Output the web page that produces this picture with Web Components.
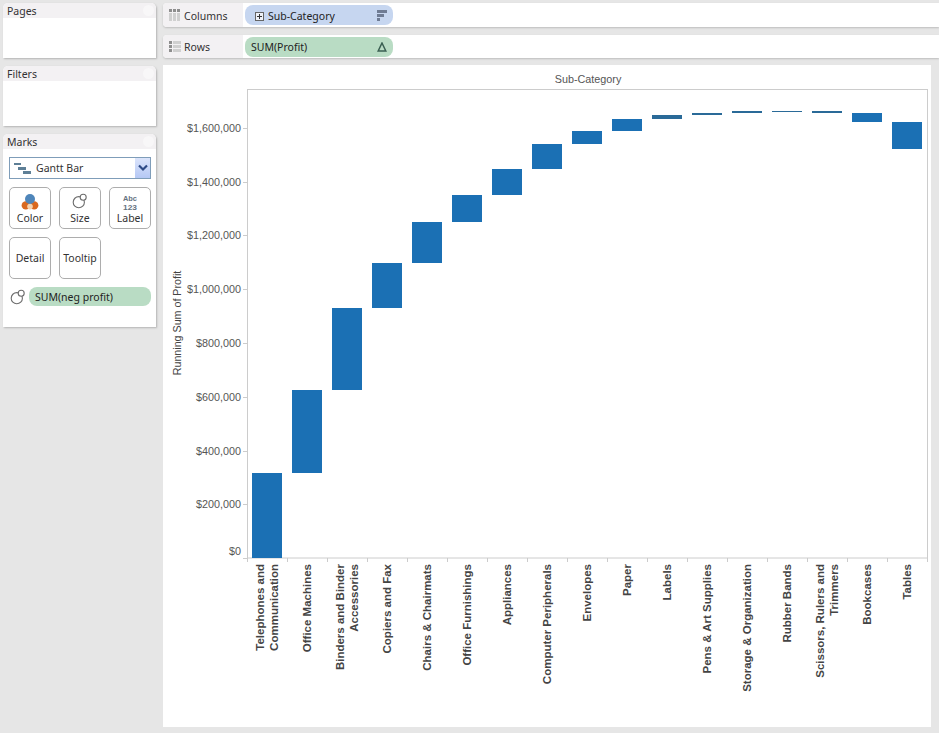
<!DOCTYPE html>
<html>
<head>
<meta charset="utf-8">
<title>Sub-Category waterfall</title>
<style>
  html, body { margin: 0; height: 100%; }
  body {
    background: #e6e6e6;
    font-family: "Noto Sans", "Liberation Sans", sans-serif;
    overflow: hidden;
  }
  .app {
    display: grid;
    grid-template-columns: 153px 1fr;
    column-gap: 7px;
    padding: 3px 0 6px 3px;
    height: 724px;
  }
  .left { display: flex; flex-direction: column; gap: 8px; }
  .right { display: flex; flex-direction: column; }
</style>
</head>
<body>
<div class="app">
  <div class="left">
    <tb-card title="Pages" style="height:55px"></tb-card>
    <tb-card title="Filters" style="height:60px"></tb-card>
    <tb-card title="Marks" style="height:193px">
      <tb-marks></tb-marks>
    </tb-card>
  </div>
  <div class="right">
    <tb-shelf label="Columns" icon="columns">
      <tb-pill color="blue" toggle sort>Sub-Category</tb-pill>
    </tb-shelf>
    <tb-shelf label="Rows" icon="rows" style="margin-top:8px;height:23px">
      <tb-pill color="green" delta>SUM(Profit)</tb-pill>
    </tb-shelf>
    <tb-chart style="margin-top:7px"></tb-chart>
  </div>
</div>

<script>
const SIZE_ICON = `<svg width="16" height="16" viewBox="0 0 16 16" fill="none" stroke="#6d6d6d" stroke-width="1.1">
  <circle cx="6.8" cy="9.2" r="5.6"/><circle cx="11.2" cy="4.2" r="3" fill="#fff"/></svg>`;

customElements.define("tb-card", class extends HTMLElement {
  constructor() {
    super();
    const root = this.attachShadow({ mode: "open" });
    root.innerHTML = `
    <style>
      :host {
        display: block;
        position: relative;
        background: #fff;
        box-shadow: 1px 1px 2px #b4b4b4;
        border-radius: 5px 5px 0 0;
        overflow: hidden;
      }
      h2 {
        margin: 0;
        box-sizing: border-box;
        height: 15px;
        padding: 2px 0 0 4px;
        font-size: 10.5px;
        line-height: 13px;
        font-weight: normal;
        color: #333;
        background: #f3f1f3;
      }
      .knob {
        position: absolute;
        top: 2px;
        right: 2px;
        width: 11px;
        height: 11px;
        border-radius: 50%;
        background: #f8f7f8;
      }
    </style>
    <h2>${this.getAttribute("title")}</h2>
    <div class="knob"></div>
    <slot></slot>
    `;
    this.removeAttribute("title");
  }
});

customElements.define("tb-shelf", class extends HTMLElement {
  constructor() {
    super();
    const root = this.attachShadow({ mode: "open" });
    const icon = this.getAttribute("icon") === "columns"
      ? `<svg width="12" height="12" viewBox="0 0 12 12">
          <g fill="#8e8e8e"><rect x="0" y="0" width="3" height="3"/><rect x="4" y="0" width="3" height="3"/><rect x="8" y="0" width="3" height="3"/></g>
          <g fill="#d0d0d0"><rect x="0" y="4" width="3" height="8"/><rect x="4" y="4" width="3" height="8"/><rect x="8" y="4" width="3" height="8"/></g>
        </svg>`
      : `<svg width="12" height="12" viewBox="0 0 12 12">
          <g fill="#8e8e8e"><rect x="0" y="0" width="3" height="3"/><rect x="0" y="4" width="3" height="3"/><rect x="0" y="8" width="3" height="3"/></g>
          <g fill="#d0d0d0"><rect x="4" y="0" width="8" height="3"/><rect x="4" y="4" width="8" height="3"/><rect x="4" y="8" width="8" height="3"/></g>
        </svg>`;
    root.innerHTML = `
    <style>
      :host {
        display: flex;
        align-items: center;
        height: 24px;
        background: #fff;
        box-shadow: 0 1px 2px #bdbdbd;
        border-radius: 4px 0 0 4px;
      }
      .head {
        width: 80px;
        height: 100%;
        display: flex;
        align-items: center;
        gap: 3px;
        padding-left: 6px;
        margin-right: 2px;
        box-sizing: border-box;
        background: #f3f1f3;
        font-size: 10.5px;
        color: #333;
        border-radius: 4px 0 0 4px;
      }
      :host([icon="columns"]) span { padding-top: 2px; }
      svg { display: block; }
    </style>
    <div class="head">${icon}<span>${this.getAttribute("label")}</span></div>
    <slot></slot>
    `;
  }
});

customElements.define("tb-pill", class extends HTMLElement {
  constructor() {
    super();
    const root = this.attachShadow({ mode: "open" });
    const toggle = this.hasAttribute("toggle")
      ? `<svg class="toggle" width="9" height="9" viewBox="0 0 9 9"><rect x=".5" y=".5" width="8" height="8" fill="#eef1f8" stroke="#666"/><path d="M2 4.5h5M4.5 2v5" stroke="#333"/></svg>`
      : "";
    const sort = this.hasAttribute("sort")
      ? `<svg class="end" width="10" height="11" viewBox="0 0 10 11"><g fill="#6f7c94"><rect width="10" height="3"/><rect y="4" width="7" height="3"/><rect y="8" width="3" height="3"/></g></svg>`
      : "";
    const delta = this.hasAttribute("delta")
      ? `<svg class="end" width="10" height="10" viewBox="0 0 10 10"><path d="M5 1 L8.8 9 H1.2 Z" fill="none" stroke="#3a5f52" stroke-width="1.5"/></svg>`
      : "";
    root.innerHTML = `
    <style>
      :host {
        display: flex;
        align-items: center;
        box-sizing: border-box;
        width: 148px;
        height: 20px;
        border-radius: 8px;
        padding: 0 6px 0 10px;
        font-size: 10.5px;
        color: #222;
        background: #b9dcc4;
      }
      :host([color="blue"]) { background: #c6d6f0; padding-top: 2px; }
      .toggle { margin-right: 4px; }
      .end { margin-left: auto; }
      :host([sort]) .end { margin-bottom: 2px; }
      :host([delta]) { padding-left: 6px; }
    </style>
    ${toggle}<slot></slot>${sort}${delta}
    `;
  }
});

customElements.define("tb-mark-button", class extends HTMLElement {
  constructor() {
    super();
    const root = this.attachShadow({ mode: "open" });
    root.innerHTML = `
    <style>
      :host {
        display: flex;
        flex-direction: column;
        align-items: center;
        justify-content: flex-end;
        box-sizing: border-box;
        width: 42px;
        height: 42px;
        border: 1px solid #adadad;
        border-radius: 5px;
        padding-bottom: 3px;
        font-size: 10.5px;
        line-height: 13px;
        color: #333;
        background: #fff;
      }
      :host([plain]) { justify-content: center; padding-bottom: 0; }
      ::slotted(svg) { display: block; margin-bottom: 1px; }
    </style>
    <slot name="icon"></slot>
    <span>${this.getAttribute("label")}</span>
    `;
  }
});

customElements.define("tb-marks", class extends HTMLElement {
  constructor() {
    super();
    const root = this.attachShadow({ mode: "open" });
    root.innerHTML = `
    <style>
      :host { display: block; padding: 8px 5px 0 6px; font-size: 10.5px; color: #333; }
      .select {
        display: flex;
        align-items: center;
        box-sizing: border-box;
        height: 22px;
        border: 1px solid #7f9db9;
      }
      .select .gantt { margin: 0 5px 0 4px; }
      .arrow {
        margin-left: auto;
        width: 15px;
        height: 20px;
        background: linear-gradient(#dbe4fb, #b5c8f5);
        display: flex;
        align-items: center;
        justify-content: center;
      }
      .grid {
        display: grid;
        grid-template-columns: repeat(3, 42px);
        column-gap: 8px;
        row-gap: 8px;
        margin-top: 8px;
      }
      .field { display: flex; align-items: center; gap: 3px; margin-top: 8px; margin-left: 1px; }
      .field svg { display: block; flex: none; }
      tb-pill { width: 122px; height: 19px; padding-left: 6px; }
    </style>
    <div class="select">
      <svg class="gantt" width="17" height="11" viewBox="0 0 17 11">
        <rect x="0" y="0" width="7" height="2" fill="#5e7f96"/>
        <rect x="4" y="4" width="8" height="3" fill="#5e7f96"/>
        <rect x="9" y="8" width="8" height="3" fill="#5e7f96"/>
      </svg>
      <span>Gantt Bar</span>
      <div class="arrow"><svg width="10" height="8" viewBox="0 0 10 8"><path d="M1 1.5 L5 5.5 L9 1.5" fill="none" stroke="#2e4a86" stroke-width="2.2"/></svg></div>
    </div>
    <div class="grid">
      <tb-mark-button label="Color">
        <svg slot="icon" width="18" height="18" viewBox="0 0 18 18">
          <circle cx="4.8" cy="12.4" r="4.2" fill="#d9681f"/>
          <circle cx="13.2" cy="12.4" r="4.2" fill="#d9681f"/>
          <circle cx="9" cy="13.6" r="2.8" fill="#f6d2ae"/>
          <circle cx="9" cy="6" r="5" fill="#4f86ba"/>
        </svg>
      </tb-mark-button>
      <tb-mark-button label="Size"><span slot="icon" id="size"></span></tb-mark-button>
      <tb-mark-button label="Label">
        <svg slot="icon" width="18" height="17" viewBox="0 0 18 17">
          <text x="9" y="6.5" text-anchor="middle" textLength="14" lengthAdjust="spacingAndGlyphs" font-family="'Liberation Sans', sans-serif" font-weight="bold" font-size="8" fill="#66727f">Abc</text>
          <text x="9" y="15.5" text-anchor="middle" textLength="14" lengthAdjust="spacingAndGlyphs" font-family="'Liberation Sans', sans-serif" font-weight="bold" font-size="8" fill="#66727f">123</text>
        </svg>
      </tb-mark-button>
      <tb-mark-button label="Detail" plain></tb-mark-button>
      <tb-mark-button label="Tooltip" plain></tb-mark-button>
    </div>
    <div class="field">${SIZE_ICON}<tb-pill color="green">SUM(neg profit)</tb-pill></div>
    `;
    root.getElementById("size").innerHTML = SIZE_ICON;
  }
});

customElements.define("tb-chart", class extends HTMLElement {
  constructor() {
    super();
    const root = this.attachShadow({ mode: "open" });
    // [top, bottom] of every bar, in page pixels
    const bars = [[473, 558], [390, 473], [308, 390], [263, 308], [222, 263], [195, 222],
      [169, 195], [144, 169], [131, 144], [119, 131], [115, 119], [113, 115], [111, 113],
      [111, 112], [111, 113], [113, 122], [122, 149]];
    const names = [["Telephones and", "Communication"], ["Office Machines"], ["Binders and Binder", "Accessories"],
      ["Copiers and Fax"], ["Chairs & Chairmats"], ["Office Furnishings"], ["Appliances"],
      ["Computer Peripherals"], ["Envelopes"], ["Paper"], ["Labels"], ["Pens & Art Supplies"],
      ["Storage & Organization"], ["Rubber Bands"], ["Scissors, Rulers and", "Trimmers"], ["Bookcases"], ["Tables"]];
    const ticks = [["$1,600,000", 128], ["$1,400,000", 182], ["$1,200,000", 235], ["$1,000,000", 289],
      ["$800,000", 343], ["$600,000", 397], ["$400,000", 451], ["$200,000", 504], ["$0", 558]];
    // the svg starts at page (163, 65)
    const ox = 163, oy = 65;
    let marks = "";
    bars.forEach((b, i) => {
      const x = 252 + i * 40 - ox;
      const thin = b[1] - b[0] < 5;
      marks += `<rect x="${x}" y="${b[0] - oy}" width="30" height="${b[1] - b[0]}" fill="${thin ? "#2a6a98" : "#1b70b4"}"/>`;
    });
    let yAxis = "";
    ticks.forEach(t => {
      const y = t[1] - oy;
      const ty = t[0] === "$0" ? y - 3 : y + 4;
      yAxis += `<line x1="${243 - ox}" x2="${247 - ox}" y1="${y + .5}" y2="${y + .5}" stroke="#ccc"/>`;
      yAxis += `<text class="tick" x="${241 - ox}" y="${ty}" text-anchor="end">${t[0]}</text>`;
    });
    let xAxis = "";
    names.forEach((lines, i) => {
      const cx = 267 + i * 40 - ox;
      const tx = 247.5 + i * 40 - ox;
      xAxis += `<line x1="${tx}" x2="${tx}" y1="${558 - oy}" y2="${562 - oy}" stroke="#ccc"/>`;
      lines.forEach((line, n) => {
        const lx = lines.length === 2 ? cx - 7 + n * 14 + 4 : cx + 4;
        xAxis += `<text class="cat" transform="translate(${lx} ${564 - oy}) rotate(-90)" text-anchor="end">${line.replace("&", "&amp;")}</text>`;
      });
    });
    xAxis += `<line x1="${927.5 - ox}" x2="${927.5 - ox}" y1="${558 - oy}" y2="${562 - oy}" stroke="#ccc"/>`;
    root.innerHTML = `
    <style>
      :host {
        display: block;
        width: 768px;
        height: 662px;
        background: #fff;
      }
      svg { display: block; }
      text { font-family: "Liberation Sans", Arial, sans-serif; }
      .tick { font-size: 10.8px; fill: #555; }
      .title { font-size: 10.8px; fill: #555; }
      .axis { font-size: 10.7px; fill: #444; }
      .cat { font-size: 11.5px; font-weight: bold; fill: #444; }
    </style>
    <svg width="768" height="662">
      <text class="title" x="${588 - ox}" y="${83 - oy}" text-anchor="middle">Sub-Category</text>
      <text class="axis" transform="translate(${181 - ox} ${323 - oy}) rotate(-90)" text-anchor="middle">Running Sum of Profit</text>
      <rect x="${247.5 - ox}" y="${89.5 - oy}" width="680" height="${558 - 89.5}" fill="none" stroke="#ccc"/>
      ${yAxis}
      ${marks}
      ${xAxis}
    </svg>
    `;
  }
});
</script>
</body>
</html>
